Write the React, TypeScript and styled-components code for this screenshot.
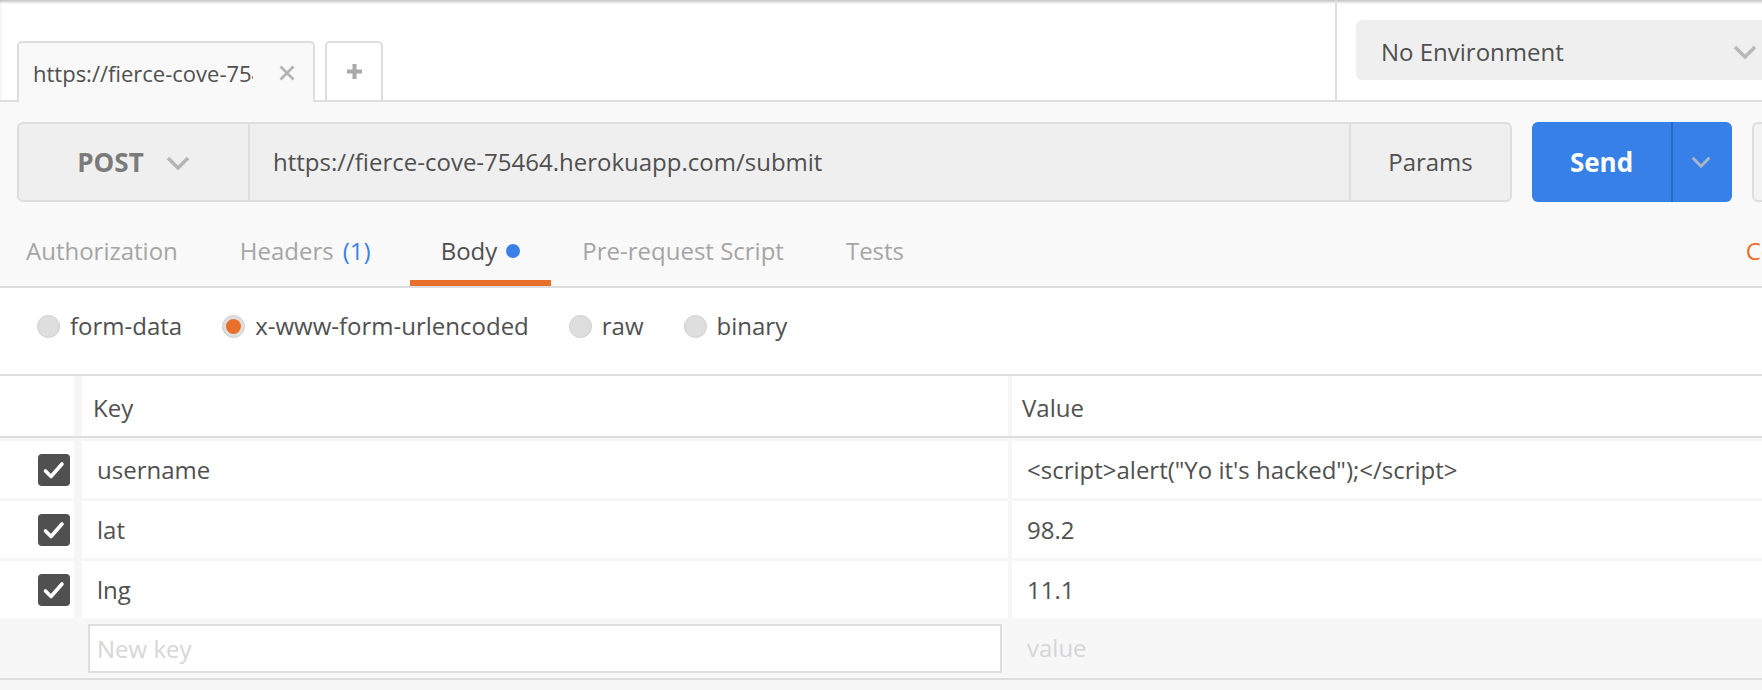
import styled, { createGlobalStyle } from "styled-components";

const GlobalStyle = createGlobalStyle`
  html, body {
    margin: 0;
    padding: 0;
    background: #f7f7f7;
    overflow: hidden;
  }
  body {
    font-family: "Open Sans", "Noto Sans", sans-serif;
    color: #505050;
  }
  * {
    box-sizing: border-box;
  }
`;

type IconProps = { color?: string; width?: number; height?: number };

const ChevronDown = ({ color = "#b5b5b5", width = 24, height = 14 }: IconProps) => (
  <svg width={width} height={height} viewBox="0 0 24 14" fill="none">
    <path d="M2 2l10 10L22 2" stroke={color} strokeWidth={3.5} />
  </svg>
);

const CloseIcon = () => (
  <svg width="16" height="16" viewBox="0 0 16 16" fill="none">
    <path d="M1.5 1.5l13 13M14.5 1.5l-13 13" stroke="#b3b3b3" strokeWidth={2.6} />
  </svg>
);

const PlusIcon = () => (
  <svg width="15" height="15" viewBox="0 0 15 15" fill="none">
    <path d="M7.5 0v15M0 7.5h15" stroke="#a9a9a9" strokeWidth={4} />
  </svg>
);

const CheckMark = () => (
  <svg width="32" height="32" viewBox="0 0 32 32" fill="none">
    <path
      d="M7.5 17l5.5 5.5L24 10"
      stroke="#fff"
      strokeWidth={3.6}
      strokeLinecap="round"
      strokeLinejoin="round"
    />
  </svg>
);

const rows = [
  { key: "username", value: `<script>alert("Yo it's hacked");</script>` },
  { key: "lat", value: "98.2" },
  { key: "lng", value: "11.1" },
];

const bodyModes = ["form-data", "x-www-form-urlencoded", "raw", "binary"];

const App = () => {
  return (
    <Viewport>
      <GlobalStyle />
      <Window>
        <Header>
          <TabStrip>
            <RequestTab $active>
              <TabTitle>https://fierce-cove-75464.herokuapp.com/submit</TabTitle>
              <CloseIcon />
            </RequestTab>
            <NewTab>
              <PlusIcon />
            </NewTab>
          </TabStrip>
          <EnvArea>
            <EnvSelect>
              <span>No Environment</span>
              <ChevronDown color="#b8b8b8" />
            </EnvSelect>
          </EnvArea>
        </Header>

        <RequestPanel>
          <UrlRow>
            <UrlBox>
              <MethodSelect>
                <span>POST</span>
                <ChevronDown />
              </MethodSelect>
              <UrlText>https://fierce-cove-75464.herokuapp.com/submit</UrlText>
              <ParamsButton>Params</ParamsButton>
            </UrlBox>
            <SendGroup>
              <SendMain>Send</SendMain>
              <SendMore>
                <ChevronDown color="#adb6c4" width={20} height={12} />
              </SendMore>
            </SendGroup>
            <SaveButton>Save</SaveButton>
          </UrlRow>

          <TabBar>
            <Tab>Authorization</Tab>
            <Tab>
              Headers
              <Count>(1)</Count>
            </Tab>
            <Tab $active>
              Body
              <Dot />
            </Tab>
            <Tab>Pre-request Script</Tab>
            <Tab>Tests</Tab>
            <SideLinks>
              <span>Cookies</span>
              <span>Code</span>
            </SideLinks>
          </TabBar>
        </RequestPanel>

        <ModeBar>
          {bodyModes.map((mode) => (
            <ModeOption key={mode}>
              <Radio $checked={mode === "x-www-form-urlencoded"} />
              {mode}
            </ModeOption>
          ))}
        </ModeBar>

        <Table>
          <HeadRow>
            <Cell $inset={0} />
            <Cell $inset={8} $pad={11} $top={3}>
              Key
            </Cell>
            <Cell $inset={4} $pad={10} $top={3}>
              Value
            </Cell>
          </HeadRow>
          {rows.map((row) => (
            <DataRow key={row.key}>
              <CheckCell>
                <Checkbox>
                  <CheckMark />
                </Checkbox>
              </CheckCell>
              <Cell $inset={8} $pad={15}>
                {row.key}
              </Cell>
              <Cell $inset={4} $pad={15}>
                {row.value}
              </Cell>
            </DataRow>
          ))}
          <NewRow>
            <div />
            <NewKeyCell>
              <KeyInput placeholder="New key" />
            </NewKeyCell>
            <NewValueCell>value</NewValueCell>
          </NewRow>
        </Table>
      </Window>
    </Viewport>
  );
};

// #region styled-components

const Viewport = styled.div`
  width: 100vw;
  height: 690px;
  overflow: hidden;
  background: #f7f7f7;
`;

const Window = styled.div`
  width: 1980px;
  font-size: 24px;
  line-height: 1.3;
`;

const Header = styled.header`
  display: flex;
  height: 102px;
  background: #fff;
  border-bottom: 2px solid #dedede;
  box-shadow: inset 0 4px 3px -2px rgba(0, 0, 0, 0.24),
    inset 3px 0 3px -2px rgba(0, 0, 0, 0.06);
`;

const TabStrip = styled.div`
  flex: 0 0 1335px;
  display: flex;
  align-items: flex-end;
  gap: 10px;
  padding-left: 17px;
`;

const RequestTab = styled.div<{ $active?: boolean }>`
  display: flex;
  align-items: center;
  width: 298px;
  height: 61px;
  margin-bottom: -2px;
  padding: 1px 18px 0 14px;
  gap: 26px;
  background: #f9f9f9;
  border: 2px solid #dedede;
  border-bottom: none;
  border-radius: 5px 5px 0 0;
`;

const TabTitle = styled.span`
  width: 220px;
  overflow: hidden;
  white-space: nowrap;
  font-size: 22px;
  color: #505050;
`;

const NewTab = styled.div`
  display: flex;
  align-items: center;
  justify-content: center;
  width: 58px;
  height: 59px;
  background: #fff;
  border: 2px solid #dedede;
  border-bottom: none;
  border-radius: 5px 5px 0 0;
`;

const EnvArea = styled.div`
  display: flex;
  align-items: center;
  padding-left: 19px;
  border-left: 2px solid #dedede;
`;

const EnvSelect = styled.div`
  display: flex;
  align-items: center;
  justify-content: space-between;
  width: 421px;
  height: 60px;
  padding: 4px 20px 0 25px;
  background: #efefef;
  border-radius: 6px;
  color: #505050;
`;

const RequestPanel = styled.section`
  background: #f9f9f9;
  border-bottom: 2px solid #dedede;
`;

const UrlRow = styled.div`
  display: flex;
  gap: 20px;
  padding: 20px 17px 0;
`;

const UrlBox = styled.div`
  flex: 1;
  display: flex;
  height: 80px;
  background: #efefef;
  border: 2px solid #dedede;
  border-radius: 6px;
`;

const MethodSelect = styled.div`
  display: flex;
  align-items: center;
  justify-content: center;
  gap: 22px;
  width: 231px;
  padding-top: 2px;
  border-right: 2px solid #dedede;
  font-size: 26px;
  font-weight: 700;
  color: #7b7b7b;
`;

const UrlText = styled.div`
  flex: 1;
  display: flex;
  align-items: center;
  padding-left: 23px;
  color: #505050;
`;

const ParamsButton = styled.div`
  display: flex;
  align-items: center;
  justify-content: center;
  width: 161px;
  border-left: 2px solid #dedede;
  color: #505050;
`;

const SendGroup = styled.div`
  display: flex;
  width: 200px;
  height: 80px;
  background: #3780e8;
  border-radius: 6px;
`;

const SendMain = styled.div`
  display: flex;
  align-items: center;
  justify-content: center;
  width: 141px;
  padding-top: 2px;
  border-right: 2px solid #2a69c6;
  color: #fff;
  font-size: 26px;
  font-weight: 700;
`;

const SendMore = styled.div`
  flex: 1;
  display: flex;
  align-items: center;
  justify-content: center;
  padding-right: 4px;
`;

const SaveButton = styled.div`
  display: flex;
  align-items: center;
  justify-content: center;
  width: 211px;
  height: 80px;
  background: #f4f4f4;
  border: 2px solid #dedede;
  border-radius: 6px;
  color: #505050;
`;

const TabBar = styled.nav`
  display: flex;
  margin-top: 20px;
`;

const Tab = styled.div<{ $active?: boolean }>`
  display: flex;
  align-items: center;
  gap: 9px;
  height: 64px;
  padding: 0 31px;
  border-bottom: 6px solid ${(p) => (p.$active ? "#e8702a" : "transparent")};
  color: ${(p) => (p.$active ? "#505050" : "#a5a5a5")};
  white-space: nowrap;

  &:first-child {
    padding-left: 26px;
  }
`;

const Count = styled.span`
  padding-right: 8px;
  color: #3b82e6;
`;

const Dot = styled.span`
  width: 14px;
  height: 14px;
  border-radius: 50%;
  background: #3a80e8;
`;

const SideLinks = styled.div`
  display: flex;
  align-items: center;
  gap: 40px;
  height: 64px;
  margin-left: auto;
  padding: 0 49px 6px 0;
  color: #e8702a;
`;

const ModeBar = styled.div`
  display: flex;
  gap: 40px;
  padding: 26px 37px 36px;
  background: #fff;
  border-bottom: 2px solid #dedede;
`;

const ModeOption = styled.label`
  display: flex;
  align-items: center;
  gap: 10px;
  height: 24px;
  color: #505050;
`;

const Radio = styled.span<{ $checked?: boolean }>`
  display: flex;
  align-items: center;
  justify-content: center;
  width: 23px;
  height: 23px;
  border-radius: 50%;
  background: #dedede;
  border: 1px solid #cfcfcf;

  &::after {
    content: "";
    width: 15px;
    height: 15px;
    border-radius: 50%;
    background: ${(p) => (p.$checked ? "#e8702a" : "transparent")};
  }
`;

const Table = styled.div`
  background: #f6f6f6;
`;

const HeadRow = styled.div`
  display: grid;
  grid-template-columns: 74px 934px 1fr;
  height: 62px;
  border-bottom: 2px solid #dedede;
  color: #505050;
`;

const Cell = styled.div<{ $inset: number; $pad?: number; $top?: number }>`
  display: flex;
  align-items: center;
  margin-left: ${(p) => p.$inset}px;
  padding-left: ${(p) => p.$pad ?? 0}px;
  padding-top: ${(p) => p.$top ?? 0}px;
  background: #fff;
  color: #505050;
  white-space: nowrap;
  overflow: hidden;
`;

const DataRow = styled.div`
  display: grid;
  grid-template-columns: 74px 934px 1fr;
  height: 60px;
  padding-top: 3px;
`;

const CheckCell = styled.div`
  display: flex;
  align-items: center;
  justify-content: flex-end;
  padding-right: 4px;
  background: #fff;
`;

const Checkbox = styled.span`
  display: flex;
  width: 32px;
  height: 32px;
  border-radius: 4px;
  background: #505050;
`;

const NewRow = styled.div`
  display: grid;
  grid-template-columns: 74px 934px 1fr;
  height: 62px;
  background: #f7f7f7;
  border-bottom: 2px solid #dedede;
`;

const NewKeyCell = styled.div`
  padding: 6px 6px 5px 14px;
`;

const KeyInput = styled.input`
  width: 100%;
  height: 100%;
  padding: 0 0 0 7px;
  background: #fff;
  border: 2px solid #dedede;
  font-family: "Open Sans", "Noto Sans", sans-serif;
  font-size: 24px;
  color: #505050;
  outline: none;

  &::placeholder {
    color: #d6d6d6;
  }
`;

const NewValueCell = styled.div`
  display: flex;
  align-items: center;
  padding-left: 19px;
  color: #d6d6d6;
`;

// #endregion

export default App;
